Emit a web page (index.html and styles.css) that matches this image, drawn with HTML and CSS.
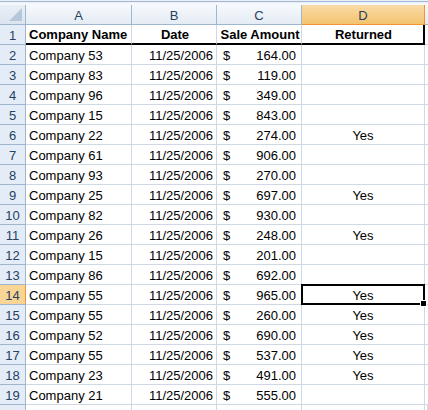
FILE: index.html
```html
<!DOCTYPE html>
<html>
<head>
<meta charset="utf-8">
<link rel="stylesheet" href="styles.css">
</head>
<body>
<div class="topbar"></div>
<div class="sheet" id="sheet">
  <div class="corner"><span class="tri"></span></div>
  <div class="colhead">A</div>
  <div class="colhead">B</div>
  <div class="colhead">C</div>
  <div class="colhead sel">D</div>
  <div class="colhead last"></div>

  <div class="rowhead">1</div>
  <div class="cell hdr left">Company Name</div>
  <div class="cell hdr center">Date</div>
  <div class="cell hdr center">Sale Amount</div>
  <div class="cell hdr center dright">Returned</div>
  <div class="cell e"></div>
</div>
<script src="app.js"></script>
</body>
</html>
```

FILE: app.js
```js
var rows = [
  ["Company 53","164.00",""],
  ["Company 83","119.00",""],
  ["Company 96","349.00",""],
  ["Company 15","843.00",""],
  ["Company 22","274.00","Yes"],
  ["Company 61","906.00",""],
  ["Company 93","270.00",""],
  ["Company 25","697.00","Yes"],
  ["Company 82","930.00",""],
  ["Company 26","248.00","Yes"],
  ["Company 15","201.00",""],
  ["Company 86","692.00",""],
  ["Company 55","965.00","Yes"],
  ["Company 55","260.00","Yes"],
  ["Company 52","690.00","Yes"],
  ["Company 55","537.00","Yes"],
  ["Company 23","491.00","Yes"],
  ["Company 21","555.00",""]
];
var s = document.getElementById('sheet');
var html = '';
rows.forEach(function(r, i){
  var n = i + 2;
  var sel = n === 14;
  html += '<div class="rowhead' + (sel ? ' sel' : '') + '">' + n + '</div>';
  html += '<div class="cell left">' + r[0] + '</div>';
  html += '<div class="cell right">11/25/2006</div>';
  html += '<div class="cell money"><span>$</span><span>' + r[1] + '</span></div>';
  html += '<div class="cell center' + (sel ? ' active' : '') + '">' + r[2] + (sel ? '<i class="handle"></i>' : '') + '</div>';
  html += '<div class="cell e"></div>';
});
html += '<div class="rowhead"></div>';
for (var k = 0; k < 5; k++) html += '<div class="cell"></div>';
s.insertAdjacentHTML('beforeend', html);
```

FILE: styles.css
```css
html, body {
  margin: 0;
  padding: 0;
  background: #ffffff;
  overflow: hidden;
}
body {
  width: 428px;
  height: 410px;
  font-family: "Liberation Sans", Arial, sans-serif;
  font-size: 13px;
  color: #000;
}
.topbar {
  height: 5px;
  box-sizing: border-box;
  background: #e9eff8;
  border-top: 1px solid #e9eff8;
  border-bottom: 2px solid #f4f7fb;
  box-shadow: inset 0 1px 0 #a6b9d1;
}
.sheet {
  display: grid;
  grid-template-columns: 26px 106px 85px 85px 123px 1fr;
  grid-template-rows: 20px repeat(20, 20px);
}
.sheet > div {
  box-sizing: border-box;
  border-right: 1px solid #d0d7e5;
  border-bottom: 1px solid #d0d7e5;
  display: flex;
  align-items: center;
  white-space: nowrap;
  overflow: visible;
  position: relative;
  padding-top: 1px;
}
.corner {
  background: linear-gradient(#e9eff7, #dbe4f0);
  border-right-color: #9eb6ce !important;
  border-bottom-color: #9eb6ce !important;
}
.tri {
  position: absolute;
  right: 3px;
  bottom: 3px;
  width: 0;
  height: 0;
  border-left: 13px solid transparent;
  border-bottom: 13px solid #b6c7dc;
}
.colhead {
  justify-content: center;
  background: linear-gradient(#f6f9fc, #e4ebf4);
  border-right-color: #9eb6ce !important;
  border-bottom-color: #9eb6ce !important;
  color: #27415f;
  font-size: 13px;
}
.colhead.sel {
  background: linear-gradient(#f9dba7, #f3c46f);
  border-bottom: 1px solid #f29436 !important;
  border-right-color: #f29436 !important;
  color: #27415f;
}
.colhead.last {
  border-right: none !important;
}
.rowhead {
  justify-content: center;
  background: #e4ecf7;
  border-right-color: #9eb6ce !important;
  border-bottom-color: #9eb6ce !important;
  color: #27415f;
}
.rowhead.sel {
  background: #f8d594;
  border-right-color: #f29436 !important;
}
.cell.left { padding-left: 3px; }
.cell.right { justify-content: flex-end; padding-right: 3px; }
.cell.center { justify-content: center; }
.cell.money {
  justify-content: space-between;
  padding-left: 6px;
  padding-right: 5px;
}
.cell.hdr {
  font-weight: bold;
  border-bottom: 2px solid #000;
}
.cell.hdr.dright {
  border-right: 2px solid #000;
}
.cell.hdr.center { padding-left: 2px; }
.cell.e { border-right: none; }
.cell.active::before {
  content: "";
  position: absolute;
  left: -1px;
  top: -1px;
  right: -1px;
  bottom: -1px;
  border: 2px solid #000;
}
.handle {
  position: absolute;
  right: -3px;
  bottom: -3px;
  width: 5px;
  height: 5px;
  background: #000;
  border: 1px solid #fff;
  z-index: 2;
}
```
